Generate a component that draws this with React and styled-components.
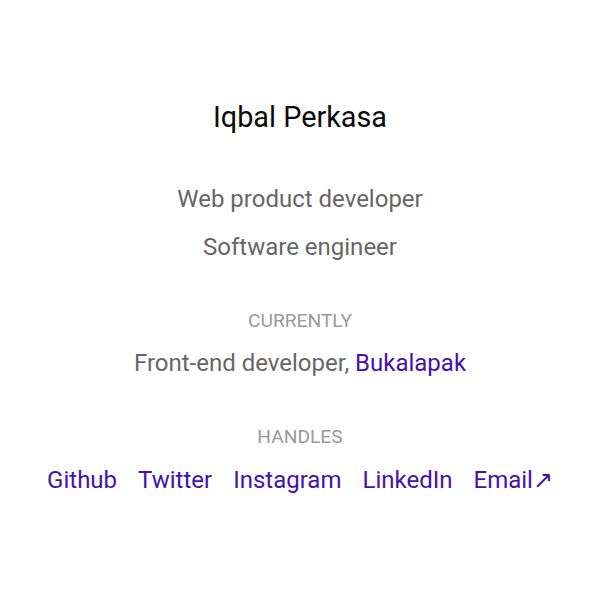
import React from "react";
import styled, { createGlobalStyle } from "styled-components";

const Global = createGlobalStyle`
  html, body { margin: 0; padding: 0; background: #fff; }
  body { font-family: Roboto, "Noto Sans", sans-serif; }
`;

const Page = styled.main`
  display: flex;
  flex-direction: column;
  align-items: center;
  padding-top: 99px;
  text-align: center;
`;

const Name = styled.h1`
  margin: 0;
  font-size: 28.8px;
  font-weight: 400;
  line-height: 36px;
  color: #0a0a0a;
`;

const Roles = styled.div`
  margin-top: 48px;
  display: flex;
  flex-direction: column;
  gap: 16px;
`;

const Line = styled.p`
  margin: 0;
  font-size: 24px;
  line-height: 32px;
  color: #666;
`;

const Section = styled.section`
  margin-top: ${(p) => p.$top}px;
  display: flex;
  flex-direction: column;
  align-items: center;
  gap: ${(p) => p.$gap}px;
`;

const Label = styled.h2`
  margin: 0;
  font-size: 19.2px;
  font-weight: 400;
  line-height: 24px;
  text-transform: uppercase;
  color: #999;
`;

const Link = styled.a`
  color: #4610b0;
  text-decoration: none;
`;

const Handles = styled.nav`
  display: flex;
  justify-content: center;
  gap: 21px;
  font-size: 24px;
  line-height: 32px;
`;

export default function App() {
  return (
    <>
      <Global />
      <Page>
        <Name>Iqbal Perkasa</Name>
        <Roles>
          <Line>Web product developer</Line>
          <Line>Software engineer</Line>
        </Roles>
        <Section $top={46} $gap={14}>
          <Label>Currently</Label>
          <Line>
            Front-end developer, <Link href="#">Bukalapak</Link>
          </Line>
        </Section>
        <Section $top={46} $gap={15}>
          <Label>Handles</Label>
          <Handles>
            <Link href="#">Github</Link>
            <Link href="#">Twitter</Link>
            <Link href="#">Instagram</Link>
            <Link href="#">LinkedIn</Link>
            <Link href="#">Email↗</Link>
          </Handles>
        </Section>
      </Page>
    </>
  );
}
